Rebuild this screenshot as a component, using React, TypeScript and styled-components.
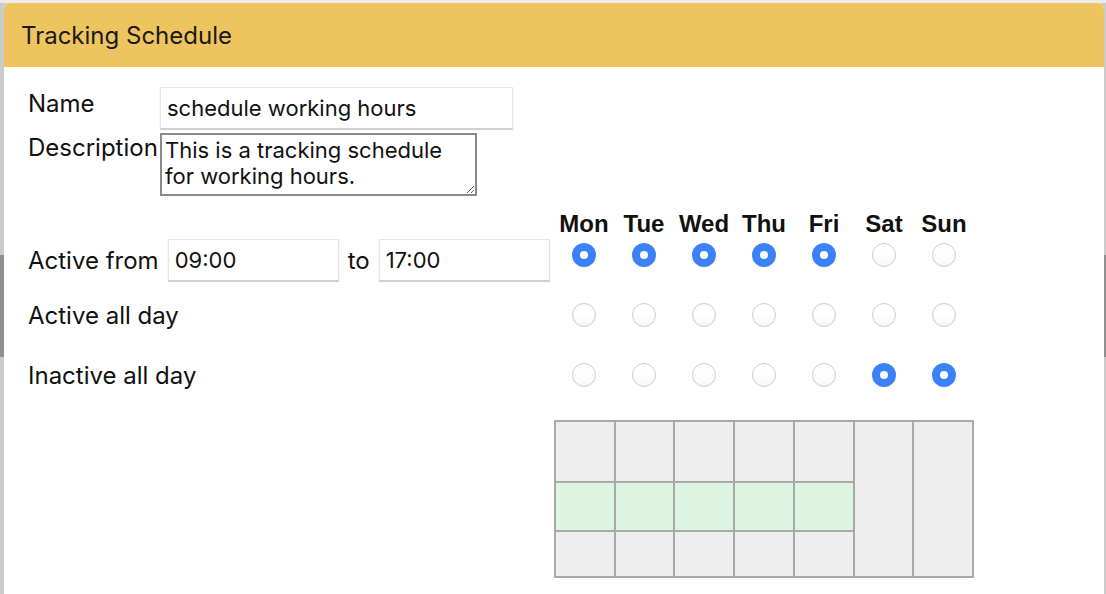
import React from 'react';
import styled, { createGlobalStyle } from 'styled-components';

const GlobalStyle = createGlobalStyle`
    html, body {
        margin: 0;
        padding: 0;
    }
    body {
        font-family: Inter, "Noto Sans", sans-serif;
        color: #111;
        background: linear-gradient(
            to bottom,
            #ececec 0px, #ececec 3px,
            #cbcbcb 3px, #cbcbcb 255px,
            #8f8f8f 255px, #8f8f8f 357px,
            #cbcbcb 357px
        );
        height: 594px;
        overflow: hidden;
    }
`;

const Dialog = styled.div`
    margin: 3px 2px 0 4px;
    height: 591px;
    background: #fff;
    border-radius: 6px 6px 0 0;
    overflow: hidden;
`;

const Header = styled.div`
    height: 64px;
    display: flex;
    align-items: center;
    padding-left: 17px;
    background: #eec45e;
    font-size: 24px;
    color: #1a1a1a;
`;

const Body = styled.div`
    padding: 20px 0 0 24px;
`;

const MetaGrid = styled.div`
    display: grid;
    grid-template-columns: 132px auto;
    row-gap: 4px;
    align-items: start;
`;

const Label = styled.label<{ $offset?: number }>`
    font-size: 24px;
    padding-top: ${p => p.$offset ?? 0}px;
    white-space: nowrap;
`;

const TextInput = styled.input<{ $width: number }>`
    box-sizing: border-box;
    width: ${p => p.$width}px;
    height: 42px;
    margin: 0;
    padding: 0 6px;
    border: 1px solid #e6e6e6;
    border-bottom-color: #d0d0d0;
    box-shadow: 0 1px 1px rgba(0, 0, 0, 0.18);
    font-family: Inter, "Noto Sans", sans-serif;
    font-size: 22px;
    color: #111;
    outline: none;
`;

const TextArea = styled.textarea`
    box-sizing: border-box;
    width: 317px;
    height: 63px;
    margin: 0;
    padding: 2px 3px;
    border: 2px solid #8a8a8a;
    font-family: Inter, "Noto Sans", sans-serif;
    font-size: 22px;
    line-height: 26px;
    color: #111;
    outline: none;
    overflow: hidden;
`;

const Schedule = styled.div`
    display: grid;
    grid-template-columns: 526px repeat(7, 60px);
    grid-template-rows: 29px 47px 60px 60px auto;
    margin-top: 13px;
`;

const DayName = styled.div`
    text-align: center;
    font-family: "Liberation Sans", Arial, sans-serif;
    font-weight: 700;
    font-size: 24px;
    line-height: 29px;
`;

const RowLabel = styled.div<{ $top?: boolean }>`
    display: flex;
    align-items: center;
    gap: 9px;
    height: 42px;
    align-self: ${p => (p.$top ? 'start' : 'center')};
    margin-top: ${p => (p.$top ? 1 : 0)}px;
    font-size: 24px;
    white-space: nowrap;
`;

const RadioCell = styled.div<{ $top?: boolean }>`
    display: flex;
    justify-content: center;
    align-items: ${p => (p.$top ? 'flex-start' : 'center')};
    padding-top: ${p => (p.$top ? 5 : 0)}px;
`;

const Radio = styled.input.attrs({ type: 'radio' })`
    appearance: none;
    box-sizing: border-box;
    width: 24px;
    height: 24px;
    margin: 0;
    border-radius: 50%;
    border: 1px solid #cdcdcd;
    background: linear-gradient(to bottom, #ffffff 40%, #f7f7f7);

    &:checked {
        border: none;
        background: #fff;
        box-shadow: inset 0 0 0 8px #3b82f6;
    }
`;

const Chart = styled.div`
    grid-column: 2 / span 7;
    margin-top: 15px;
    width: 420px;
    box-sizing: border-box;
    display: grid;
    grid-template-columns: repeat(7, 1fr);
    grid-template-rows: 59px 47px 44px;
    gap: 2px;
    padding: 2px;
    background: #a9a9a9;
`;

const Cell = styled.div<{ $active?: boolean; $full?: boolean }>`
    background: ${p => (p.$active ? '#dcf4e1' : '#eeeeee')};
    grid-row: ${p => (p.$full ? '1 / span 3' : 'auto')};
`;

const days = ['Mon', 'Tue', 'Wed', 'Thu', 'Fri', 'Sat', 'Sun'];
// 0 = active from/to, 1 = active all day, 2 = inactive all day
const modes = [0, 0, 0, 0, 0, 2, 2];

const App: React.FC = () => {
    const rows = [
        { label: null, top: true },
        { label: 'Active all day', top: false },
        { label: 'Inactive all day', top: false },
    ];

    return (
        <>
            <GlobalStyle />
            <Dialog>
                <Header>Tracking Schedule</Header>
                <Body>
                    <MetaGrid>
                        <Label $offset={2}>Name</Label>
                        <TextInput $width={353} defaultValue="schedule working hours" />
                        <Label>Description</Label>
                        <TextArea defaultValue="This is a tracking schedule for working hours." />
                    </MetaGrid>

                    <Schedule>
                        <div />
                        {days.map(d => (
                            <DayName key={d}>{d}</DayName>
                        ))}

                        {rows.map((row, r) => (
                            <React.Fragment key={r}>
                                {row.label === null ? (
                                    <RowLabel $top>
                                        <span>Active from</span>
                                        <TextInput $width={171} defaultValue="09:00" />
                                        <span>to</span>
                                        <TextInput $width={171} defaultValue="17:00" />
                                    </RowLabel>
                                ) : (
                                    <RowLabel>{row.label}</RowLabel>
                                )}
                                {days.map((d, i) => (
                                    <RadioCell key={d} $top={row.top}>
                                        <Radio name={`mode-${d}`} defaultChecked={modes[i] === r} />
                                    </RadioCell>
                                ))}
                            </React.Fragment>
                        ))}

                        <Chart>
                            {days.map((d, i) =>
                                modes[i] === 0 ? (
                                    <React.Fragment key={d}>
                                        <Cell style={{ gridColumn: i + 1, gridRow: 1 }} />
                                        <Cell $active style={{ gridColumn: i + 1, gridRow: 2 }} />
                                        <Cell style={{ gridColumn: i + 1, gridRow: 3 }} />
                                    </React.Fragment>
                                ) : (
                                    <Cell key={d} $full style={{ gridColumn: i + 1 }} />
                                )
                            )}
                        </Chart>
                    </Schedule>
                </Body>
            </Dialog>
        </>
    );
};

export default App;
